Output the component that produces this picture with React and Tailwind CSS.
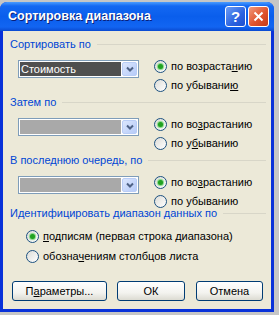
import React from 'react';

const font = { fontFamily: '"Liberation Sans", Arial, sans-serif' };

function Radio({ checked }) {
  return (
    <span className="w-[13px] h-[13px] rounded-full border border-[#1c5180] bg-[linear-gradient(135deg,#dcdcd7_0%,#ffffff_100%)] flex items-center justify-center shrink-0">
      {checked && <span className="w-[5px] h-[5px] rounded-full bg-[#21a121] shadow-[0_0_1px_1px_#7fd67f]" />}
    </span>
  );
}

function RadioRow({ checked, children, h = 'h-[19px]' }) {
  return (
    <div className={`${h} flex items-center gap-[4px]`}>
      <Radio checked={checked} />
      <span className="text-[11px] text-black leading-none">{children}</span>
    </div>
  );
}

function Heading({ children }) {
  return (
    <div className="h-[13px] flex items-center gap-[6px] pr-[4px]">
      <span className="text-[11px] text-[#0046d5] leading-none whitespace-nowrap">{children}</span>
      <div className="flex-1 h-px bg-[#d8d6c8]" />
    </div>
  );
}

function Combo({ value }) {
  return (
    <div className="mt-[3px] ml-[8px] w-[121px] h-[18px] border border-[#7f9db9] bg-white flex p-[1px]">
      {value ? (
        <div className="flex-1 bg-[#4f4f4f] text-white text-[11px] leading-none flex items-center pl-[1px]">{value}</div>
      ) : (
        <div className="flex-1 bg-[#a9a9a9]" />
      )}
      <div className="w-[15px] ml-[1px] bg-[linear-gradient(135deg,#dbe6fd_0%,#b6cbf8_100%)] border border-[#b9cdf6] rounded-[2px] flex items-center justify-center">
        <svg width="8" height="6" viewBox="0 0 8 6"><path d="M1 1.5 L4 4.5 L7 1.5" stroke="#4d6185" strokeWidth="2" fill="none" /></svg>
      </div>
    </div>
  );
}

function SortGroup({ title, value, asc, desc }) {
  return (
    <div className="mb-[1px]">
      <Heading>{title}</Heading>
      <div className="mt-[6px] flex items-start h-[38px]">
        <Combo value={value} />
        <div className="ml-[15px] flex flex-col">
          <RadioRow checked>{asc}</RadioRow>
          <RadioRow>{desc}</RadioRow>
        </div>
      </div>
    </div>
  );
}

function Btn({ w, children }) {
  return (
    <div className={`${w} h-[20px] rounded-[3px] border border-[#003c74] bg-[linear-gradient(to_bottom,#ffffff_0%,#f3f3ef_60%,#dcdbd2_100%)] flex items-center justify-center text-[11px] leading-none text-black`}>
      {children}
    </div>
  );
}

export default function App() {
  return (
    <div className="w-[279px] h-[315px] bg-[#c6c6c6] pt-[2px] overflow-hidden" style={font}>
      <div className="w-[274px] h-[310px] rounded-t-[7px] bg-[#0831d9] flex flex-col">
        <div className="h-[29px] rounded-t-[7px] bg-[linear-gradient(to_bottom,#4a9cff_0%,#1468f2_14%,#0a5eec_50%,#1265f2_86%,#0a4ad0_100%)] flex items-center pl-[8px] pr-[5px]">
          <span className="text-white font-bold text-[12.5px] leading-none [text-shadow:1px_1px_0_#0a1e78]">Сортировка диапазона</span>
          <div className="ml-auto flex gap-[2px]">
            <div className="w-[21px] h-[21px] rounded-[3px] border border-white bg-[linear-gradient(135deg,#6d9cf5_0%,#2b63e0_60%,#1d4fcf_100%)] flex items-center justify-center text-white font-bold text-[15px] leading-none">?</div>
            <div className="w-[21px] h-[21px] rounded-[3px] border border-white bg-[linear-gradient(135deg,#f19a7c_0%,#e0542e_55%,#c53a17_100%)] flex items-center justify-center">
              <svg width="11" height="11" viewBox="0 0 11 11"><path d="M1.5 1.5 L9.5 9.5 M9.5 1.5 L1.5 9.5" stroke="white" strokeWidth="2" /></svg>
            </div>
          </div>
        </div>
        <div className="flex-1 mx-[3px] mb-[3px] bg-[#ece9d8] pl-[7px] pr-[1px] pt-[7px]">
          <SortGroup title="Сортировать по" value="Стоимость" asc={<>по возраста<u>н</u>ию</>} desc={<>по убывани<u>ю</u></>} />
          <SortGroup title="Затем по" asc={<>по во<u>з</u>растанию</>} desc={<>по у<u>б</u>ыванию</>} />
          <SortGroup title="В последнюю очередь, по" asc={<>по во<u>з</u>растанию</>} desc={<>по убыванию</>} />
          <div className="mt-[-5px]">
            <Heading>Идентифицировать диапазон данных по</Heading>
            <div className="mt-[6px] pl-[16px]">
              <RadioRow checked h="h-[20px]"><u>п</u>одписям (первая строка диапазона)</RadioRow>
              <RadioRow h="h-[20px]">обозна<u>ч</u>ениям столбцов листа</RadioRow>
            </div>
          </div>
          <div className="mt-[15px] flex pl-[2px]">
            <Btn w="w-[95px]">П<u>а</u>раметры...</Btn>
            <div className="ml-[10px]"><Btn w="w-[68px]">ОК</Btn></div>
            <div className="ml-[11px]"><Btn w="w-[67px]">Отмена</Btn></div>
          </div>
        </div>
      </div>
    </div>
  );
}
